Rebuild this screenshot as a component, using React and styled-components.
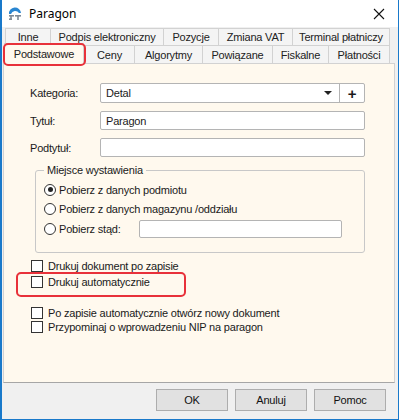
import React from 'react';
import styled, { createGlobalStyle } from 'styled-components';

const GlobalStyle = createGlobalStyle`
  * { box-sizing: border-box; }
  body {
    margin: 0;
    background: #ffffff;
    font-family: "Liberation Sans", Arial, sans-serif;
    font-size: 11px;
    letter-spacing: -0.2px;
    color: #1a1a1a;
  }
`;

// Window frame
const Window = styled.div`
  width: 399px;
  height: 420px;
  display: flex;
  flex-direction: column;
  background: #f0f0f0;
  border: 1px solid #1979ca;
  border-top: none;
  border-left-width: 2px;
`;

const TitleBar = styled.div`
  height: 27px;
  flex: none;
  display: flex;
  align-items: center;
  gap: 6px;
  padding: 0 13px 0 5px;
  background: #ffffff;
`;

const TitleText = styled.span`
  flex: 1;
  font-family: "Noto Sans", "Open Sans", sans-serif;
  font-size: 12px;
  letter-spacing: 0;
  color: #000;
`;

// Tabs
const TabStrip = styled.div`
  flex: none;
  display: flex;
  flex-direction: column;
  padding: 1px 0 0 3px;
`;

const TabRow = styled.div`
  display: flex;
  height: ${p => p.$height}px;
  align-items: flex-end;
`;

const Tab = styled.div`
  position: relative;
  width: ${p => p.$w}px;
  height: 100%;
  display: flex;
  align-items: center;
  justify-content: center;
  background: #f4f4f4;
  border: 1px solid #d2d2d2;
  border-bottom: none;
  margin-right: -1px;
  white-space: nowrap;
  color: #222;
`;

const ActiveTab = styled(Tab)`
  height: calc(100% + 3px);
  margin: 0 0 -1px -1px;
  background: #fff9ee;
  z-index: 2;

  &::after {
    content: '';
    position: absolute;
    left: -2px;
    right: -3px;
    top: -1px;
    bottom: -2px;
    border: 2px solid #e8313a;
    border-radius: 5px;
  }
`;

// Page panel
const Panel = styled.div`
  flex: 1;
  margin: 0 3px 0 1px;
  background: #fff9ee;
  border: 1px solid #d2d2d2;
  border-bottom-color: #a6a6a6;
  padding: 19px 29px 0 26px;
  display: flex;
  flex-direction: column;
`;

const FormGrid = styled.div`
  display: grid;
  grid-template-columns: 70px 1fr;
  grid-template-rows: 20px 19px 19px;
  row-gap: 8px;
  align-items: center;
`;

const Label = styled.span`
  white-space: nowrap;
`;

const TextBox = styled.div`
  height: ${p => p.$h || 19}px;
  width: ${p => (p.$w ? `${p.$w}px` : 'auto')};
  background: #fff;
  border: 1px solid #b4b4b4;
  border-radius: 2px;
  display: flex;
  align-items: center;
  padding-left: 5px;
`;

const Combo = styled.div`
  height: 20px;
  display: flex;
  background: #fff;
  border: 1px solid #b4b4b4;
  border-radius: 2px;
`;

const ComboValue = styled.div`
  flex: 1;
  display: flex;
  align-items: center;
  justify-content: space-between;
  padding: 0 7px 0 5px;
`;

const Arrow = styled.span`
  width: 0;
  height: 0;
  border-left: 4px solid transparent;
  border-right: 4px solid transparent;
  border-top: 4px solid #222;
`;

const PlusButton = styled.div`
  width: 25px;
  border-left: 1px solid #b4b4b4;
  display: flex;
  align-items: center;
  justify-content: center;
  font-weight: bold;
  font-size: 15px;
  line-height: 1;
`;

// Group box
const Group = styled.fieldset`
  margin: 7px 0 0 5px;
  padding: 3px 0 13px 8px;
  border: 1px solid #c8c8c8;
  border-radius: 3px;
  display: flex;
  flex-direction: column;
`;

const Legend = styled.legend`
  padding: 0 3px;
  line-height: 13px;
`;

const OptionRow = styled.div`
  display: flex;
  align-items: center;
  gap: 3px;
  height: ${p => p.$h || 19}px;
`;

const Radio = styled.span`
  width: 12px;
  height: 12px;
  border-radius: 50%;
  border: 1px solid #333;
  background: #fff;
  display: flex;
  align-items: center;
  justify-content: center;

  &::after {
    content: '';
    display: ${p => (p.$checked ? 'block' : 'none')};
    width: 5px;
    height: 5px;
    border-radius: 50%;
    background: #222;
  }
`;

const RadioLabel = styled.span`
  width: ${p => (p.$w ? `${p.$w}px` : 'auto')};
  white-space: nowrap;
`;

// Checkboxes
const CheckRow = styled.div`
  position: relative;
  display: flex;
  align-items: center;
  gap: 5px;
  height: 14px;
  margin: ${p => p.$mt || 0}px 0 0 1px;
  white-space: nowrap;

  ${p =>
    p.$marked &&
    `
    &::after {
      content: '';
      position: absolute;
      left: -15px;
      top: -3px;
      width: 166px;
      height: 21px;
      border: 2px solid #e8313a;
      border-radius: 5px;
    }
  `}
`;

const CheckBox = styled.span`
  flex: none;
  width: 12px;
  height: 12px;
  border: 1px solid #333;
  background: #fff;
`;

// Footer
const Footer = styled.div`
  height: 36px;
  flex: none;
  display: flex;
  justify-content: flex-end;
  align-items: flex-start;
  gap: 7px;
  padding: 6px 12px 0 0;
`;

const Button = styled.button`
  width: 72px;
  height: 22px;
  background: #e1e1e1;
  border: 1px solid #adadad;
  font-family: "Liberation Sans", Arial, sans-serif;
  font-size: 11px;
  letter-spacing: -0.2px;
  color: #111;
  padding: 0;
`;

const AppIcon = () => (
  <svg width="16" height="16" viewBox="0 0 16 16">
    <path d="M2 8 A6 6 0 0 1 14 7 L12 7 A4.5 4.5 0 0 0 4 8 Z" fill="#2a86d1" />
    <rect x="2" y="9" width="5" height="1.6" fill="#7f8a96" />
    <rect x="3.2" y="9" width="1.6" height="5" fill="#7f8a96" />
    <rect x="8" y="9" width="6" height="1.6" fill="#7f8a96" />
    <rect x="10.2" y="9" width="1.6" height="5" fill="#7f8a96" />
    <rect x="2" y="12.4" width="3" height="1.6" fill="#7f8a96" />
  </svg>
);

const CloseIcon = () => (
  <svg width="12" height="12" viewBox="0 0 12 12">
    <path d="M1 1 L11 11 M11 1 L1 11" stroke="#111" strokeWidth="1.1" />
  </svg>
);

const topTabs = [
  ['Inne', 46],
  ['Podpis elektroniczny', 114],
  ['Pozycje', 56],
  ['Zmiana VAT', 75],
  ['Terminal płatniczy', 98],
];

const bottomTabs = [
  ['Ceny', 51],
  ['Algorytmy', 69],
  ['Powiązane', 71],
  ['Fiskalne', 57],
  ['Płatności', 62],
];

const App = () => (
  <>
    <GlobalStyle />
    <Window>
      <TitleBar>
        <AppIcon />
        <TitleText>Paragon</TitleText>
        <CloseIcon />
      </TitleBar>

      <TabStrip>
        <TabRow $height={17}>
          {topTabs.map(([name, w]) => (
            <Tab key={name} $w={w}>{name}</Tab>
          ))}
        </TabRow>
        <TabRow $height={18}>
          <ActiveTab $w={80}>Podstawowe</ActiveTab>
          {bottomTabs.map(([name, w]) => (
            <Tab key={name} $w={w}>{name}</Tab>
          ))}
        </TabRow>
      </TabStrip>

      <Panel>
        <FormGrid>
          <Label>Kategoria:</Label>
          <Combo>
            <ComboValue>
              Detal
              <Arrow />
            </ComboValue>
            <PlusButton>+</PlusButton>
          </Combo>
          <Label>Tytuł:</Label>
          <TextBox>Paragon</TextBox>
          <Label>Podtytuł:</Label>
          <TextBox />
        </FormGrid>

        <Group>
          <Legend>Miejsce wystawienia</Legend>
          <OptionRow>
            <Radio $checked />
            <RadioLabel>Pobierz z danych podmiotu</RadioLabel>
          </OptionRow>
          <OptionRow>
            <Radio />
            <RadioLabel>Pobierz z danych magazynu /oddziału</RadioLabel>
          </OptionRow>
          <OptionRow $h={21}>
            <Radio />
            <RadioLabel $w={77}>Pobierz stąd:</RadioLabel>
            <TextBox $w={203} $h={18} />
          </OptionRow>
        </Group>

        <CheckRow $mt={6}>
          <CheckBox />
          Drukuj dokument po zapisie
        </CheckRow>
        <CheckRow $mt={2} $marked>
          <CheckBox />
          Drukuj automatycznie
        </CheckRow>
        <CheckRow $mt={17}>
          <CheckBox />
          Po zapisie automatycznie otwórz nowy dokument
        </CheckRow>
        <CheckRow>
          <CheckBox />
          Przypominaj o wprowadzeniu NIP na paragon
        </CheckRow>
      </Panel>

      <Footer>
        <Button>OK</Button>
        <Button>Anuluj</Button>
        <Button>Pomoc</Button>
      </Footer>
    </Window>
  </>
);

export default App;
